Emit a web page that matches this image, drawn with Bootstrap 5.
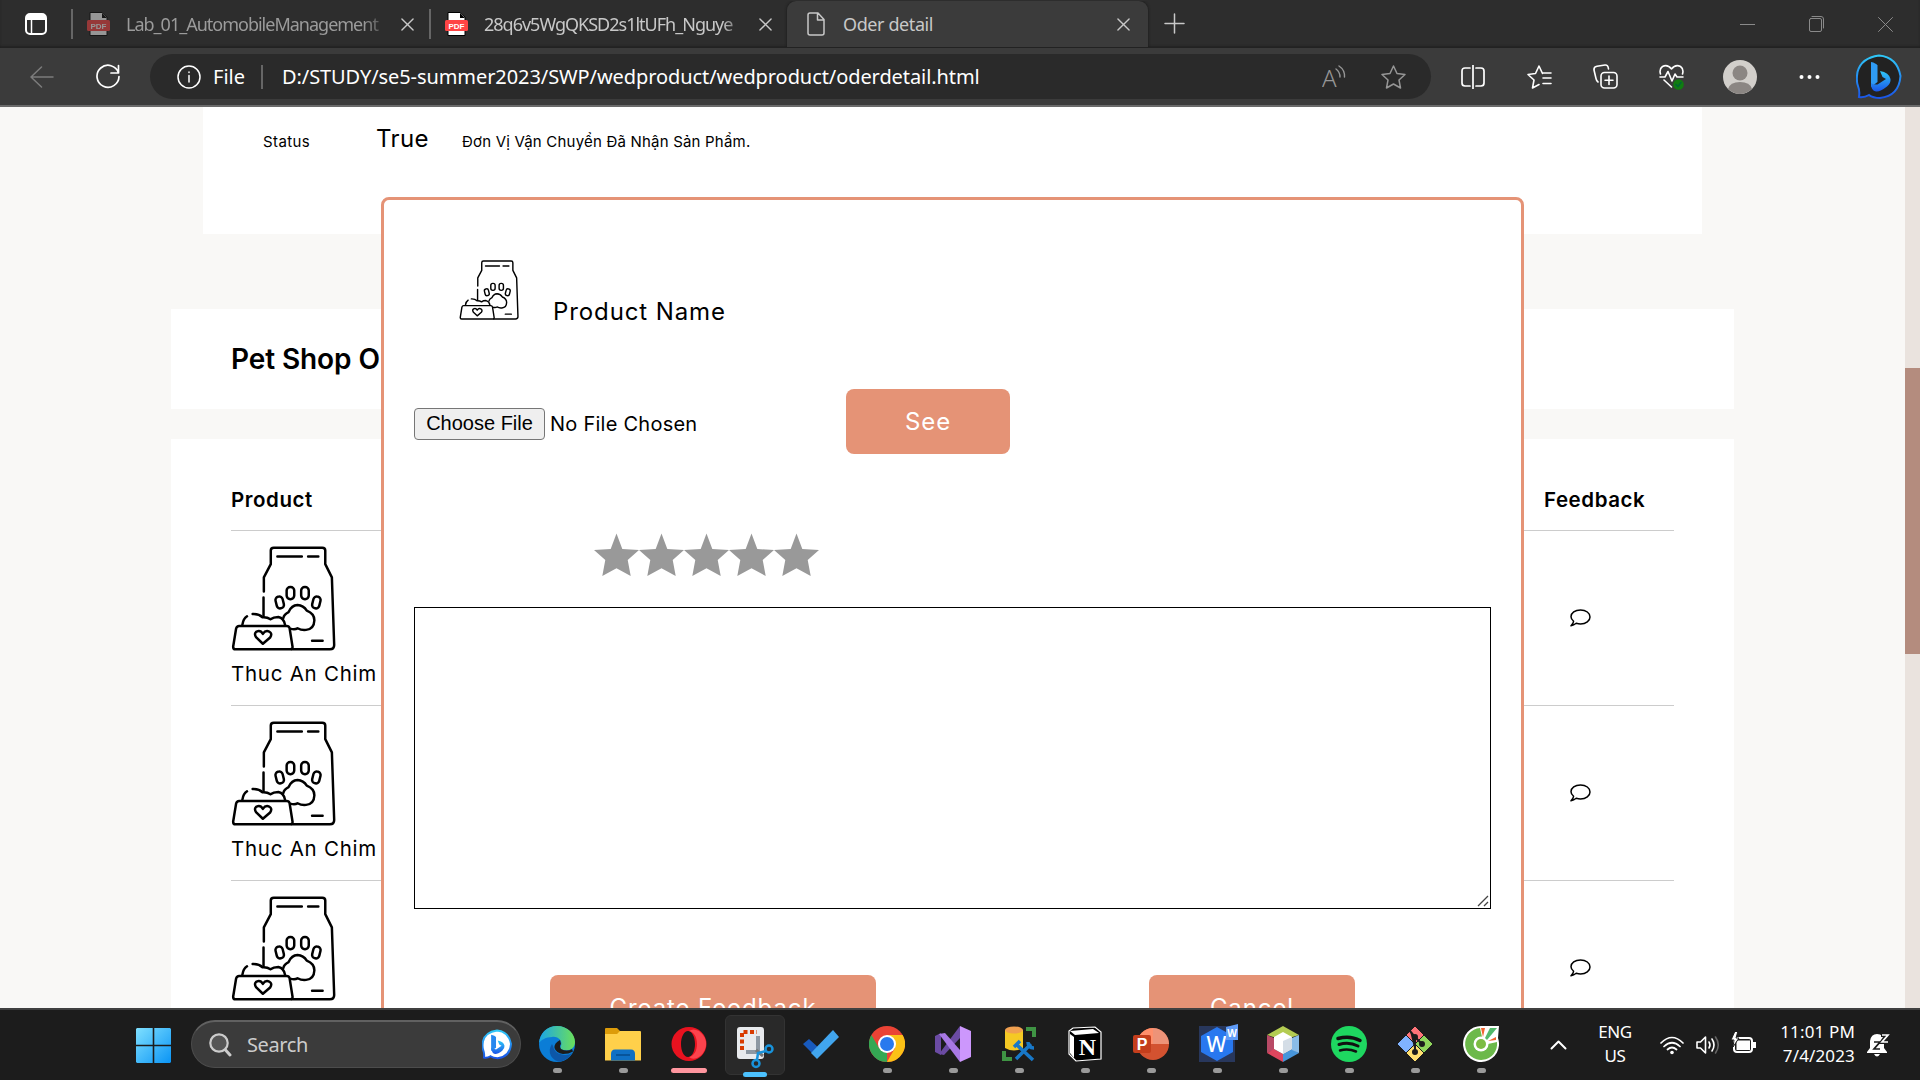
<!DOCTYPE html>
<html lang="en">
<head>
<meta charset="utf-8">
<title>Oder detail</title>
<link href="https://cdn.jsdelivr.net/npm/bootstrap@5.3.0/dist/css/bootstrap.min.css" rel="stylesheet">
<style>
  :root { --coral:#e59376; --ui:"Segoe UI","Noto Sans",sans-serif; --pop:Inter,sans-serif; }
  body { width:1920px; height:1080px; overflow:hidden; background:#f9f8f6; font-family:var(--pop); color:#000; }
  svg { display:block; flex:none; }
  .ln { fill:none; stroke:currentColor; stroke-linecap:round; stroke-linejoin:round; }
  .ui { font-family:var(--ui); white-space:nowrap; }

  /* tab strip */
  .tabstrip { height:48px; background:#2d2d2d; color:#c8c8c8; font-size:18px; line-height:46px; box-shadow:inset 0 -2px 2px #222; }
  .tab-a { width:358px; padding-left:14px; }
  .tab-b { width:356px; padding-left:14px; }
  .tab-on { width:361px; padding-left:20px; background:#3b3b3b; border-radius:9px 9px 0 0; box-shadow:0 0 3px #161616; clip-path:inset(0 -4px 0 -4px); }
  .tab-title { width:264px; overflow:hidden; letter-spacing:-.4px; }
  .tab-tight { letter-spacing:-1px; }
  .fade-end { -webkit-mask-image:linear-gradient(90deg,#000 90%,transparent); mask-image:linear-gradient(90deg,#000 90%,transparent); }
  .vbar { width:2px; height:30px; background:#666; flex:none; }

  /* toolbar */
  .toolbar { height:59px; background:#3b3b3b; border-bottom:2px solid #6a6a6a; color:#fff; }
  .addr { width:1281px; height:45px; border-radius:23px; background:#2a2a2a; font-size:20px; line-height:44px; padding-left:27px; margin-left:30px; }
  .url { letter-spacing:-.08px; }
  .tool { width:66px; display:flex; justify-content:center; flex:none; }

  /* page */
  .viewport { height:901px; position:relative; overflow:hidden; }
  .scroll-track { width:15px; background:#eae3de; flex:none; }
  .scroll-thumb { height:286px; margin-top:261px; background:#b48c7e; }
  .panel-status { width:1499px; height:127px; margin-left:203px; padding:14px 60px 0; background:#fff; }
  .panel-wide { width:1563px; margin-left:171px; padding:0 60px; background:#fff; }
  .shop-title { height:100px; margin-top:75px; font-size:28px; font-weight:600; line-height:100px; letter-spacing:-.1px; }
  .orders { height:580px; margin-top:30px; font-size:20px; }
  .orders-head { height:92px; line-height:122px; font-weight:600; border-bottom:1px solid #ccc; font-size:20.5px; letter-spacing:.55px; }
  .order-line { height:175px; border-bottom:1px solid #ccc; }
  .order-item { padding-top:7px; line-height:46px; font-size:20.5px; letter-spacing:.75px; }
  .col-feed { width:130px; flex:none; }
  .nowrap { white-space:nowrap; }

  /* feedback dialog */
  .dialog-box { position:absolute; left:381px; top:90px; width:1143px; height:960px; background:#fff; border:3px solid var(--coral); border-radius:8px; padding:60px 30px 0; }
  .btn-coral { --bs-btn-bg:var(--coral); --bs-btn-color:#fff; --bs-btn-border-width:0; --bs-btn-border-radius:8px; font-size:24px; height:65px; padding:0; background:var(--coral); color:#fff; line-height:65px; letter-spacing:.9px; }
  .choose { width:131px; height:32px; border:1px solid #767676; border-radius:4px; background:#efefef; font:20px/28px "Liberation Sans",Arial,sans-serif; padding:0 0 2px; color:#000; }
  .note-wrap { width:1077px; height:302px; margin-top:30px; position:relative; }
  .note-area { width:100%; height:100%; border:1px solid #000; display:block; resize:none; }
  .note-grip { position:absolute; right:2px; bottom:2px; }

  /* taskbar */
  .taskbar { height:72px; background:#1c1c1c; border-top:2px solid #404040; color:#fff; padding-left:136px; }
  .searchbox { width:330px; height:48px; margin:-2px 3px 0 20px; border-radius:24px; background:#3b3b3b; border:1px solid #4c4c4c; border-top:2px solid #616161; padding:0 8px 0 17px; font-size:20px; color:#ccc; }
  .app { width:66px; height:70px; padding-top:16px; display:flex; flex-direction:column; align-items:center; flex:none; }
  .run { width:9px; height:5px; border-radius:3px; background:#9a9a9a; margin-top:6px; flex:none; }
  .app-tile { width:60px; height:60px; margin:0 3px; padding-top:11px; background:#292929; border:1px solid #333; border-radius:6px; }
  .stamp { font-size:17px; line-height:24px; letter-spacing:-.35px; margin-top:-2px; }
</style>
<script src="https://cdn.jsdelivr.net/npm/bootstrap@5.3.0/dist/js/bootstrap.bundle.min.js"></script>
</head>
<body class="d-flex flex-column">

<svg width="0" height="0" class="position-absolute">
  <symbol id="bag" viewBox="33 46 315 318">
    <g fill="none" stroke="#000" stroke-width="7.5" stroke-linecap="round" stroke-linejoin="round">
      <path d="M131 184 131 141 152 101V60Q152 51 161 51H308Q317 51 317 60V101L337 141 344 346Q344 359 331 359H215M130 202V258"/>
      <path d="M172 78H246M265 78H296M277 333H309"/>
      <path d="M56 288H200Q207 288 209 295L218 352Q218 359 211 359H45Q38 359 38 351L47 296Q49 288 56 288Z"/>
      <path d="M66 284Q69 266 80 259M97 252Q116 251 127 262Q141 261 151 268Q160 261 175 261Q192 265 195 284"/>
      <path d="M128 342 108 323Q100 311 109 305Q121 300 128 312Q136 300 147 305Q158 311 150 323Z"/>
      <path d="M190 264Q192 253 206 246Q215 226 233 225Q251 226 261 242Q284 251 284 271Q283 298 259 300Q246 302 233 295Q226 300 213 297"/>
      <rect x="200" y="170" width="23" height="37" rx="11"/><rect x="244" y="170" width="23" height="37" rx="11"/>
      <rect x="168" y="199" width="22" height="36" rx="10" transform="rotate(-14 179 217)"/><rect x="279" y="199" width="22" height="36" rx="10" transform="rotate(14 290 217)"/>
    </g>
  </symbol>
  <symbol id="chat" viewBox="0 0 21 18"><path class="ln" stroke="#000" stroke-width="1.5" d="M3.6 12.3C1.8 10.700 1 9.300 1 7.700 1 4 5 1 10.500 1S20 4 20 7.900 16 15 10.500 15C9 15 7.500 14.700 6.200 14.300 4.800 15.500 3.200 16.500 1 16.800 2.500 15.300 3.500 14 3.600 12.300Z"/></symbol>
  <symbol id="starshape" viewBox="0 0 45 43"><path fill="#999" d="M22.500 0 28.300 15.500 45 16.600 33.700 26.500 36.700 42.500 22.500 34.700 8.300 42.500 11.300 26.500 0 16.600 16.700 15.500Z"/></symbol>
  <symbol id="pdf" viewBox="0 0 23 24"><path fill="#fff" stroke="#000" d="M3 .5H15L20 5V23.500H3Z"/><path d="M15 1V6H20Z"/><rect y="8" width="23" height="11" rx="1.500" fill="#f44"/><text x="11.500" y="16.700" font-size="8" font-weight="700" font-family="Liberation Sans" fill="#fff" text-anchor="middle">PDF</text></symbol>
  <symbol id="cross" viewBox="0 0 14 14"><path class="ln" stroke-width="1.500" d="M1 1 13 13M13 1 1 13"/></symbol>
  <linearGradient id="gEdge" x1="0" x2="1"><stop stop-color="#1aa5e8"/><stop offset="1" stop-color="#6be05a"/></linearGradient>
  <linearGradient id="gBing" x1="0" y1="0" x2="0" y2="1"><stop stop-color="#2fc8f8"/><stop offset="1" stop-color="#1a55e8"/></linearGradient>
  <linearGradient id="gWin" x1="0" y1="0" x2="1" y2="1" ><stop stop-color="#7fe0ff"/><stop offset="1" stop-color="#0a94f5"/></linearGradient>
</svg>

<!-- tab strip -->
<div class="tabstrip ui d-flex align-items-center">
  <svg width="22" height="24" viewBox="0 0 22 24" style="margin:0 24px 0 25px"><rect x="1" y="2" width="20" height="20" rx="4" fill="none" stroke="#fff" stroke-width="2"/><path fill="#fff" d="M1 3H21V8H1Z"/><path stroke="#fff" stroke-width="1.500" d="M6.500 8V22"/></svg>
  <div class="vbar"></div>
  <div class="tab-a d-flex align-items-center">
    <svg width="23" height="24" opacity=".5"><use href="#pdf"/></svg>
    <div class="tab-title tab-tight fade-end ms-3" style="color:#9b9b9b">Lab_01_AutomobileManagement</div>
    <svg width="13" height="13" class="ms-2" style="translate:3px 0"><use href="#cross"/></svg>
  </div>
  <div class="d-flex align-items-center" style="margin-left:-2px">
    <div class="vbar"></div>
    <div class="tab-b d-flex align-items-center">
      <svg width="23" height="24"><use href="#pdf"/></svg>
      <div class="tab-title tab-tight fade-end ms-3">28q6v5WgQKSD2s1ltUFh_Nguye</div>
      <svg width="13" height="13" class="ms-2" style="translate:3px 0"><use href="#cross"/></svg>
    </div>
  </div>
  <div class="tab-on d-flex align-items-center">
    <svg width="18" height="24" viewBox="0 0 18 24" class="ln" stroke-width="1.500"><path d="M3 1H11L17 7.500V21Q17 23 15 23H3Q1 23 1 21V3Q1 1 3 1ZM10.500 1.500V8H16.500"/></svg>
    <div class="tab-title" style="margin-left:18px;width:274px">Oder detail</div>
    <svg width="13" height="13"><use href="#cross"/></svg>
  </div>
  <svg width="21" height="21" viewBox="0 0 21 21" class="ln" stroke-width="1.500" style="margin:-2px 0 0 16px"><path d="M10.500 1V20M1 10.500H20"/></svg>
  <div class="ms-auto d-flex align-items-center" style="gap:54px;padding-right:27px;color:#8a8a8a">
    <svg width="15" height="15" viewBox="0 0 15 15"><path stroke="currentColor" d="M0 7.500H15"/></svg>
    <svg width="15" height="16" viewBox="0 0 15 16" class="ln"><rect x=".5" y="2.500" width="12" height="13" rx="1.500"/><path d="M3 .5H12Q14.500.5 14.500 3V12"/></svg>
    <svg width="15" height="15" viewBox="0 0 15 15" class="ln"><path d="M.5.5 14.500 14.500M14.500.5.5 14.500"/></svg>
  </div>
</div>

<!-- address row -->
<div class="toolbar ui d-flex align-items-center">
  <svg width="24" height="22" viewBox="0 0 24 22" class="ln" stroke-width="1.500" style="margin-left:30px;color:#7c7c7c"><path d="M23 11H1M11.500 1 1 11 11.500 21"/></svg>
  <svg width="24" height="25" viewBox="0 0 24 25" class="ln" stroke-width="1.700" style="margin-left:42px"><path d="M22.500 9A11 11 0 1 0 23 12.500M22.500 1.500V9H15"/></svg>
  <div class="addr d-flex align-items-center">
    <svg width="24" height="24" viewBox="0 0 24 24" class="ln" stroke-width="1.500"><circle cx="12" cy="12" r="11"/><path d="M12 10.500V17M12 7V7.500"/></svg>
    <span style="margin-left:12px">File</span>
    <div class="vbar" style="height:24px;margin:0 19px 0 16px"></div>
    <span class="url">D:/STUDY/se5-summer2023/SWP/wedproduct/wedproduct/oderdetail.html</span>
    <svg width="25" height="24" viewBox="0 0 25 24" class="ms-auto ln" style="color:#969696" stroke-width="1.400"><text x="0" y="22" font-family="Noto Sans" font-weight="300" font-size="24" fill="currentColor" stroke="none">A</text><path d="M14 4Q18 7 18 12M17 1Q23 5 22.500 12"/></svg>
    <svg width="25" height="24" viewBox="0 0 25 24" class="ln" style="margin:0 25px 0 34px;color:#969696" stroke-width="1.500"><path d="M12.500 1 16 8.500 24 9.500 18 15 19.500 23 12.500 19 5.500 23 7 15 1 9.500 9 8.500Z"/></svg>
  </div>
  <div class="tool" style="margin-left:9px"><svg width="24" height="24" viewBox="0 0 24 24" class="ln" stroke-width="1.700"><path d="M12 0V24M9 3H4Q1 3 1 6V18Q1 21 4 21H9M15 3H20Q23 3 23 6V18Q23 21 20 21H15"/></svg></div>
  <div class="tool"><svg width="25" height="24" viewBox="0 0 25 24" class="ln" stroke-width="1.600"><path d="M15.500 8.500 12 1 8.500 8.500 1 9.500 7 15 5.500 23 12 19.500M16 13H24M16 18.500H24M16 8H24"/></svg></div>
  <div class="tool"><svg width="25" height="25" viewBox="0 0 25 25" class="ln" stroke-width="1.600"><rect x="8" y="8.500" width="16" height="15.500" rx="3.500"/><path d="M16 12V20.500M12 16.300H20M5 18Q3.500 17 3 14.500L1 6Q.6 3 4 2.300L12 1Q15 .6 15.500 5"/></svg></div>
  <div class="tool"><svg width="25" height="26" viewBox="0 0 25 26" class="ln" stroke-width="1.600"><path d="M1.500 10Q0 5 3.500 2.500 8.500 0 12.500 5 16.500 0 21.500 2.500 25 5 23.500 10M1 13H6L9 7.500 13 17 16 10 18 13H24M5 16 12.500 23"/><circle cx="19.500" cy="20.500" r="5.300" fill="#107c10" stroke="none"/><path stroke="#063" d="M17 20.500 19 22.500 22 18.500"/></svg></div>
  <div class="tool" style="width:72px"><svg width="34" height="34" viewBox="0 0 34 34"><circle cx="17" cy="17" r="17" fill="#d2cfcb"/><circle cx="17" cy="13" r="7.500" fill="#8b8683"/><path fill="#8b8683" d="M5 29Q7 22 17 22T29 29Q17 39 5 29Z"/></svg></div>
  <div class="tool"><svg width="21" height="6" viewBox="0 0 21 6" fill="#fff"><circle cx="2.500" cy="3" r="2"/><circle cx="10.500" cy="3" r="2"/><circle cx="18.500" cy="3" r="2"/></svg></div>
  <div class="tool ms-1"><svg width="46" height="46" viewBox="0 0 46 46"><path d="M3 43Q4 37 2 32 0 27 1.500 18 5 4 23 1.500 41 3 44.500 22 43 42 24 44 17 44 13 41 8 44 3 43Z" fill="#222" stroke="url(#gBing)" stroke-width="2"/><path fill="#2f9bf5" d="M15 8Q20 9 21.500 11.500V28L15 33Z"/><path fill="url(#gBing)" d="M15 29Q15 37 20 37.500 24 38 31 32.500 35 29 34.500 25 33 18.500 24 17L26.500 23 30 25 21.500 30.500Q18 31 15 29Z"/></svg></div>
</div>

<!-- page -->
<div class="viewport d-flex">
  <main class="flex-grow-1">
    <section class="panel-status d-flex align-items-baseline nowrap">
      <span style="width:113px;font-size:15px;letter-spacing:.4px">Status</span>
      <span style="width:86px;font-size:24px;letter-spacing:.4px">True</span>
      <span style="font-size:15px;letter-spacing:.2px">Đơn Vị Vận Chuyển Đã Nhận Sản Phẩm.</span>
    </section>
    <section class="panel-wide shop-title nowrap">Pet Shop O</section>
    <section class="panel-wide orders">
      <div class="orders-head d-flex justify-content-between"><span>Product</span><span class="col-feed">Feedback</span></div>
      <div class="order-line d-flex justify-content-between align-items-center">
        <div class="order-item"><svg width="105" height="105"><use href="#bag"/></svg><div class="nowrap">Thuc An Chim</div></div>
        <div class="col-feed" style="padding-left:26px"><svg width="21" height="18"><use href="#chat"/></svg></div>
      </div>
      <div class="order-line d-flex justify-content-between align-items-center">
        <div class="order-item"><svg width="105" height="105"><use href="#bag"/></svg><div class="nowrap">Thuc An Chim</div></div>
        <div class="col-feed" style="padding-left:26px"><svg width="21" height="18"><use href="#chat"/></svg></div>
      </div>
      <div class="order-line d-flex justify-content-between align-items-center">
        <div class="order-item"><svg width="105" height="105"><use href="#bag"/></svg><div>&nbsp;</div></div>
        <div class="col-feed" style="padding-left:26px"><svg width="21" height="18"><use href="#chat"/></svg></div>
      </div>
    </section>
  </main>
  <div class="scroll-track"><div class="scroll-thumb"></div></div>

  <div class="dialog-box">
    <div class="d-flex align-items-end" style="margin-left:45px;height:60px">
      <svg width="60" height="60"><use href="#bag"/></svg>
      <span class="nowrap" style="margin:0 0 -4px 34px;font-size:24px;line-height:24px;letter-spacing:.9px">Product Name</span>
    </div>
    <div class="d-flex align-items-center" style="margin-top:69px">
      <button class="choose mt-1">Choose File</button>
      <span class="nowrap mt-1" style="width:296px;margin-left:5px;font-size:20px;letter-spacing:.25px">No File Chosen</span>
      <button class="btn btn-coral" style="width:164px">See</button>
    </div>
    <div class="d-flex" style="margin:79px 0 0 180px">
      <svg width="45" height="44"><use href="#starshape"/></svg><svg width="45" height="44"><use href="#starshape"/></svg><svg width="45" height="44"><use href="#starshape"/></svg><svg width="45" height="44"><use href="#starshape"/></svg><svg width="45" height="44"><use href="#starshape"/></svg>
    </div>
    <div class="note-wrap">
      <textarea class="note-area"></textarea>
      <svg class="note-grip" width="12" height="12" viewBox="0 0 12 12"><path stroke="#444" stroke-width="1.300" d="M1 11 11 1M7 11 11 7"/></svg>
    </div>
    <div class="d-flex" style="margin:66px 0 0 136px">
      <button class="btn btn-coral" style="width:326px">Create Feedback</button>
      <button class="btn btn-coral" style="width:206px;margin-left:273px">Cancel</button>
    </div>
  </div>
</div>

<!-- taskbar -->
<div class="taskbar ui d-flex align-items-center">
  <svg width="35" height="35" viewBox="0 0 35 35"><path fill="url(#gWin)" d="M1 0H16.700V16.700H0V1ZM18.300 0H34L35 1V16.700H18.300ZM0 18.300H16.700V35H1L0 34ZM18.300 18.300H35V34L34 35H18.300Z"/></svg>
  <div class="searchbox d-flex align-items-center">
    <svg width="23" height="24" viewBox="0 0 23 24" class="ln" stroke="#ddd" stroke-width="2.200"><circle cx="10" cy="10" r="8.700" fill="#555"/><path stroke-width="3" d="M16.500 17 21 22"/></svg>
    <span style="margin-left:15px;letter-spacing:-.4px">Search</span>
    <svg width="30" height="31" viewBox="0 0 46 46" class="ms-auto"><path d="M3 43Q4 37 2 32 0 27 1.500 18 5 4 23 1.500 41 3 44.500 22 43 42 24 44 17 44 13 41 8 44 3 43Z" fill="#fff" stroke="url(#gBing)" stroke-width="3"/><path fill="#2688ee" d="M14 8Q20 9 21.500 11.500V28L14 33Z"/><path fill="url(#gBing)" d="M14 28Q15 37 20 37.500 24 38 31 32.500 35 29 34.500 25 33 18.500 24 17L26.500 23 30 25 21.500 30.500Z"/></svg>
  </div>

  <div class="app"><svg width="36" height="36" viewBox="0 0 36 36"><circle cx="18" cy="18" r="18" fill="#0b7dd6"/><path fill="url(#gEdge)" d="M0 17C1 7 8 0 18 0 29 0 36 8 36 16 36 22 31 25 26 24 21 24 21 22 22 20 24 15 19 10 13 11 7 11 2 14 0 17Z"/><path fill="#0d57a8" d="M13 18Q9 24 12 30 16 36 22 35.500 30 33 33 27 29 30 23 28.500 15 27 14 20Z"/><path fill="#1c1c1c" d="M21 14Q15 17 15.500 22 17 27 24 28 30 28 34 25.500L33 23Q28 26 22 23 20 20 22 18Z"/></svg><div class="run"></div></div>
  <div class="app"><svg width="36" height="36" viewBox="0 0 36 36"><path fill="#dd9c0a" d="M0 3Q0 2 1 2H12L16 6V10H0Z"/><path fill="#ffd04a" d="M0 8H12L15 5H35Q36 5 36 6V34.500H0Z"/><path fill="#0f70c4" d="M6 34.500V28Q6 23.500 10 23.500H26Q30 23.500 30 28V34.500Z"/><path stroke="#064b8c" stroke-width="1.500" d="M11 29H25"/></svg><div class="run"></div></div>
  <div class="app"><svg width="36" height="36" viewBox="0 0 36 36"><path fill="#e8121f" fill-rule="evenodd" d="M18 1A17.500 17 0 1 1 18 35 17.500 17 0 1 1 18 1ZM17 5C13 5 10 11 10 18S13 31 17 31 24 25 24 18 21 5 17 5Z"/><path fill="#ff5059" d="M18 31C23 30 26 25 26 18S23 6 18 5Q22 2 28 5 36 11 35 20 33 29 26 32 21 34 18 31Z" opacity=".8"/></svg><div class="run" style="width:36px;background:#ff969f"></div></div>
  <div class="app app-tile"><svg width="38" height="42" viewBox="0 0 38 42" style="margin:0 0 -5px 2px"><rect width="27" height="32" rx="3" fill="#e8eaed"/><path fill="none" stroke="#d83b01" stroke-width="4" stroke-dasharray="4 2.500" d="M5 23V5H20"/><path fill="none" stroke="#8d98a3" stroke-width="4" d="M21 9V25H9"/><path stroke="#777" stroke-width="3" d="M19 23 26 29"/><g fill="none" stroke="#1893dc" stroke-width="2.500"><circle cx="32" cy="22" r="3.500"/><circle cx="19" cy="36.500" r="3.500"/><path d="M29 24 21 26 20 33"/></g></svg><div class="run" style="width:24px;margin-top:8px;background:#4cc2ff"></div></div>
  <div class="app"><svg width="36" height="36" viewBox="0 0 36 36"><path fill="#185abd" d="M0 18 6 13 18 24 14 32Z"/><path fill="#41a5ee" d="M8 27 30 4 36 11 14 33Z"/></svg></div>
  <div class="app"><svg width="36" height="36" viewBox="0 0 36 36"><circle cx="18" cy="18" r="18" fill="#ea4335"/><path fill="#34a853" d="M2.400 9 10 22 18 27 18 36A18 18 0 0 1 2.400 9Z"/><path fill="#fbc116" d="M18 9H33.600A18 18 0 0 1 18 36L26 22Z"/><circle cx="18" cy="18" r="9" fill="#fff"/><circle cx="18" cy="18" r="7" fill="#2879ee"/></svg><div class="run"></div></div>
  <div class="app"><svg width="36" height="36" viewBox="0 0 36 36"><path fill="#6b4ba3" d="M0 10 6 7V29L0 26Z"/><path fill="#6b4ba3" d="M4 28 25 0V12L9 29Z"/><path fill="#a878e4" d="M4 8 10 7 25 24V36Z"/><path fill="#cc97fc" d="M25 0 36 5V31L25 36Z"/></svg><div class="run"></div></div>
  <div class="app"><svg width="36" height="36" viewBox="0 0 36 36"><path fill="#f5c924" d="M4 4H22V22Q13 27 4 22Z"/><ellipse cx="13" cy="4" rx="9" ry="3.500" fill="#f0a050"/><path fill="none" stroke="#3f9444" stroke-width="4" d="M25 3H33V11M3 25V33H11"/><path fill="none" stroke="#1878c8" stroke-width="3.500" d="M15 33 30 18M16 19 32 34M13 21 19 15M27 16Q27 22 33 22"/></svg><div class="run"></div></div>
  <div class="app"><svg width="36" height="36" viewBox="0 0 36 36"><path stroke="#fff" stroke-width="1.200" d="M2 5 6 2 28 1 34 6V33L9 35 2 28Z"/><path fill="#fff" d="M3 5 26 3 32 7 8 9Z"/><path fill="#fff" d="M3 8 7 11V32L3 27Z"/><text x="20.500" y="29" font-family="Liberation Serif" font-size="24" font-weight="700" fill="#fff" text-anchor="middle">N</text></svg><div class="run"></div></div>
  <div class="app"><svg width="36" height="36" viewBox="0 0 36 36"><circle cx="20" cy="18" r="16" fill="#d35230"/><path fill="#ff8f6b" d="M4 18A16 16 0 0 1 20 2V18Z"/><path fill="#ffc0a8" opacity=".6" d="M20 2A16 16 0 0 1 36 18H20Z"/><rect y="9" width="18" height="18" rx="2" fill="#c43e1c"/><text x="9" y="23.500" font-family="Liberation Sans" font-weight="700" font-size="16" fill="#fff" text-anchor="middle">P</text></svg><div class="run"></div></div>
  <div class="app"><svg width="40" height="38" viewBox="0 0 40 38" style="margin:-2px 0 0 4px"><rect y="2" width="36" height="36" fill="#28375c"/><path fill="#2878ef" d="M18 3 34 12V28L18 37 2 28V12Z"/><text x="17.500" y="28" font-family="Noto Sans" font-size="21" font-weight="500" fill="#fff" text-anchor="middle">W</text><path fill="#5f9bf7" d="M27 3 39 0V16H27Z"/><text x="33" y="13" font-family="Noto Sans" font-size="10" font-weight="700" fill="#fff" text-anchor="middle">W</text></svg><div class="run"></div></div>
  <div class="app"><svg width="32" height="36" viewBox="0 0 32 36"><path fill="#b4cc52" d="M16 0 32 9 16 14 0 9Z"/><path fill="#b84a66" d="M0 9 7 12V24L0 27Z"/><path fill="#e0465e" d="M0 27 7 23 16 28V36Z"/><path fill="#4795da" d="M16 28 25 23 32 27 16 36Z"/><path fill="#8abce8" d="M32 9 25 12V24L32 27Z"/><path fill="#fff" d="M16 6 25 11V23L16 28 7 23V11Z"/><path fill="#d4dde6" d="M16 15 25 11V23L16 28Z"/></svg><div class="run"></div></div>
  <div class="app"><svg width="36" height="36" viewBox="0 0 36 36"><circle cx="18" cy="18" r="18" fill="#1ed760"/><g fill="none" stroke="#111" stroke-linecap="round"><path stroke-width="3.500" d="M7 12.500Q19 9 29 14.500"/><path stroke-width="3" d="M8 18.500Q18 15.500 27 20"/><path stroke-width="2.500" d="M9 24.500Q17 22 25 25.500"/></g></svg><div class="run"></div></div>
  <div class="app"><svg width="36" height="36" viewBox="0 0 36 36"><g stroke="#1c1c1c"><path fill="#ff7378" d="M18 0 27 9 18 18 9 9Z"/><path fill="#80b3ff" d="M9 9 18 18 9 27 0 18Z"/><path fill="#8fd65c" d="M27 9 36 18 27 27 18 18Z"/><path fill="#ffe070" d="M18 18 27 27 18 36 9 27Z"/></g><g stroke="#1c1c1c" stroke-width="2" fill="#1c1c1c"><path d="M13 5 18 11V26M18 11 25 18"/><circle cx="18" cy="11" r="2"/><circle cx="25" cy="18" r="2"/><circle cx="18" cy="26" r="2"/></g></svg><div class="run"></div></div>
  <div class="app"><svg width="36" height="36" viewBox="0 0 36 36"><path fill="#fff" d="M18 0H36L35 12A18 18 0 1 1 18 0Z"/><path fill="#6cb94a" d="M17 2A16 16 0 1 0 34 16L25 18A7 7 0 1 1 19 11Z"/><circle cx="18" cy="18" r="7.500" fill="#fff"/><circle cx="18" cy="18" r="5" fill="#7cbc42"/><path fill="#f26430" d="M18 2H22L20 11ZM25 15 33 11V14Z"/><path fill="#53b96a" d="M22 12 27 2H34L24 14Z"/></svg><div class="run"></div></div>

  <svg width="17" height="10" viewBox="0 0 17 10" class="ln" stroke-width="2" style="margin-left:36px"><path d="M1.500 8.500 8.500 1.500 15.500 8.500"/></svg>
  <div class="stamp text-center" style="width:40px;margin-left:28px">ENG<br>US</div>
  <svg width="24" height="19" viewBox="0 0 24 19" class="ln" stroke-width="1.700" style="margin-left:25px"><path d="M1 7Q12-4 23 7M4 10.500Q12 3 20 10.500M7.500 13.500Q12 9.500 16.500 13.500"/><circle cx="12" cy="16.500" r="1.800" fill="#fff" stroke="none"/></svg>
  <svg width="24" height="20" viewBox="0 0 24 20" class="ln" stroke-width="1.600" style="margin-left:12px"><path d="M1 7H4.500L9.500 2V18L4.500 13H1ZM13 7Q15 10 13 13M16 4Q20 10 16 16"/><path stroke="#666" d="M19.500 2Q25 10 19.500 18"/></svg>
  <svg width="25" height="21" viewBox="0 0 25 21" style="margin:-5px 0 0 11px"><rect x="3" y="6" width="18" height="14" rx="3" fill="none" stroke="#fff" stroke-width="2"/><rect x="5.500" y="8.500" width="13.500" height="9.500" fill="#fff"/><path fill="#fff" d="M22 10H25V16H22Z"/><path fill="#fff" stroke="#1c1c1c" d="M4-1 0 8H3L2 15 8 6H5L7-1Z"/></svg>
  <div class="stamp text-end" style="width:80px;margin-left:19px;letter-spacing:.15px">11:01 PM<br>7/4/2023</div>
  <svg width="23" height="25" viewBox="0 0 23 25" style="margin-left:12px"><path fill="#fff" d="M0 19 3 15V8Q4 1 10 1 17 1 17 9V15L20 19V20H0ZM7 21H13Q10 26 7 21Z"/><path fill="none" stroke="#1c1c1c" stroke-width="1.700" d="M7 9H13L7 16H13"/><path fill="none" stroke="#1c1c1c" stroke-width="4" d="M14 2H20L15 9H20"/><path fill="none" stroke="#fff" stroke-width="1.700" d="M15 2H21L15 9H21"/></svg>
</div>
</body>
</html>
